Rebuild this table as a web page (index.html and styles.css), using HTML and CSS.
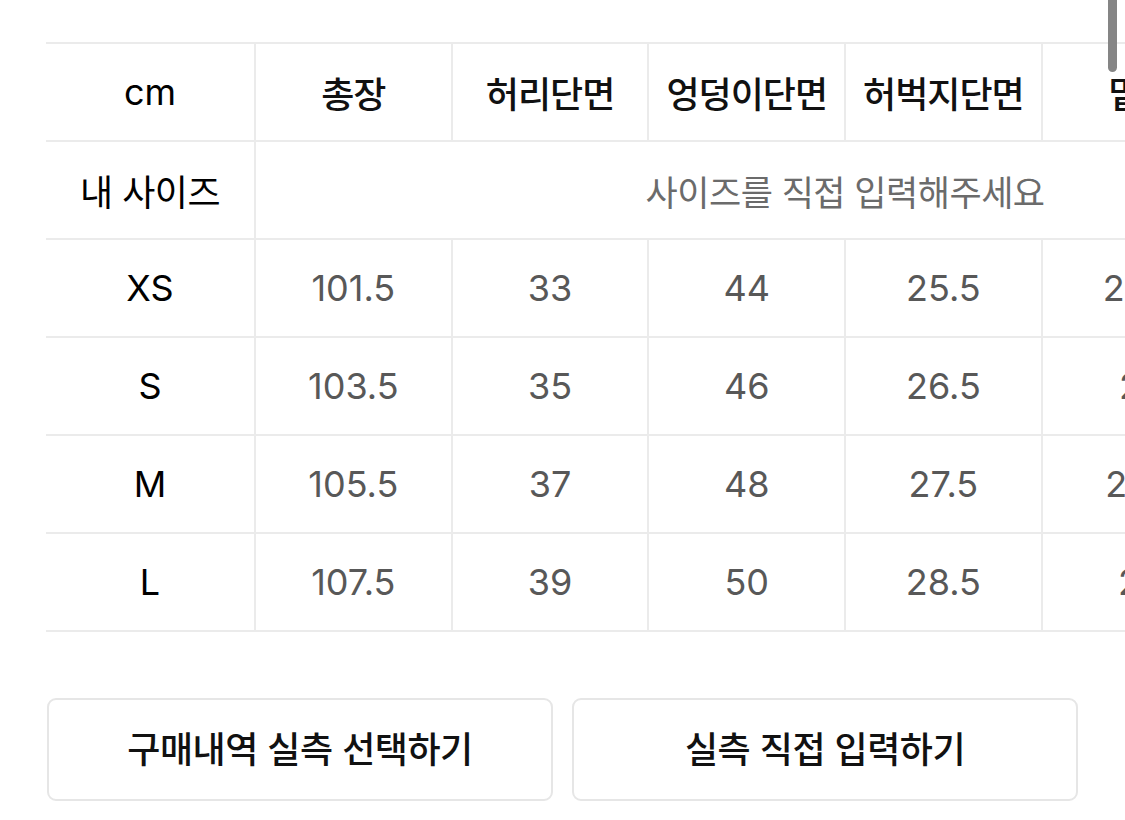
FILE: index.html
```html
<!DOCTYPE html>
<html lang="ko">
<head>
<meta charset="utf-8">
<link rel="stylesheet" href="styles.css">
</head>
<body>
<div class="page">
  <div class="table-wrap">
    <table class="size-table">
      <colgroup>
        <col class="col-label">
        <col class="col-data"><col class="col-data"><col class="col-data">
        <col class="col-data"><col class="col-data"><col class="col-data">
      </colgroup>
      <tr class="head">
        <th class="label latin">cm</th>
        <th>총장</th>
        <th>허리단면</th>
        <th>엉덩이단면</th>
        <th>허벅지단면</th>
        <th>밑위</th>
        <th>밑단단면</th>
      </tr>
      <tr>
        <th class="label mine">내 사이즈</th>
        <td class="hint" colspan="6">사이즈를 직접 입력해주세요</td>
      </tr>
      <tr>
        <th class="label latin">XS</th>
        <td>101.5</td><td>33</td><td>44</td><td>25.5</td><td>26.5</td><td>19</td>
      </tr>
      <tr>
        <th class="label latin">S</th>
        <td>103.5</td><td>35</td><td>46</td><td>26.5</td><td>27</td><td>20</td>
      </tr>
      <tr>
        <th class="label latin">M</th>
        <td>105.5</td><td>37</td><td>48</td><td>27.5</td><td>27.5</td><td>21</td>
      </tr>
      <tr>
        <th class="label latin">L</th>
        <td>107.5</td><td>39</td><td>50</td><td>28.5</td><td>28</td><td>22</td>
      </tr>
    </table>
  </div>
  <div class="actions">
    <button class="btn">구매내역 실측 선택하기</button>
    <button class="btn">실측 직접 입력하기</button>
  </div>
  <div class="scroll-thumb"></div>
</div>
</body>
</html>
```
FILE: styles.css
```css
html, body {
  margin: 0;
  padding: 0;
  background: #ffffff;
  overflow: hidden;
}
body {
  width: 1125px;
  height: 820px;
  font-family: Inter, "Noto Sans CJK KR", sans-serif;
  color: #111;
}
.page {
  position: relative;
  width: 1125px;
  height: 820px;
  overflow: hidden;
}
.table-wrap {
  padding: 42px 0 0 46px;
  width: 1079px;
  overflow: hidden;
}
.size-table {
  border-collapse: collapse;
  table-layout: fixed;
  width: 1389px;
}
.col-label { width: 209px; }
.col-data { width: 196.7px; }
.size-table th,
.size-table td {
  height: 96px;
  padding: 0;
  border: 2px solid #ebebeb;
  text-align: center;
  vertical-align: middle;
  white-space: nowrap;
}
.size-table tr > :first-child {
  border-left: none;
}
.size-table th {
  font-family: "Noto Sans CJK KR", sans-serif;
  font-size: 36px;
  font-weight: 500;
  letter-spacing: -1px;
  color: #111;
}
.size-table th.latin {
  font-family: Inter, "Noto Sans CJK KR", sans-serif;
  font-size: 36px;
  letter-spacing: 0;
  font-weight: 400;
  color: #000;
}
.size-table th.mine {
  font-size: 36px;
  letter-spacing: -0.5px;
  font-weight: 400;
  color: #000;
}
.size-table td {
  font-family: Inter, sans-serif;
  font-size: 36px;
  font-weight: 400;
  letter-spacing: 0;
  color: #585858;
}
.size-table td.hint {
  font-family: "Noto Sans CJK KR", sans-serif;
  font-size: 35px;
  letter-spacing: -0.5px;
  color: #6b6b6b;
}
.actions {
  display: flex;
  gap: 19px;
  padding: 66px 0 0 47px;
}
.btn {
  width: 506px;
  height: 103px;
  background: #fff;
  border: 2px solid #e6e6e6;
  border-radius: 9px;
  font-family: "Noto Sans CJK KR", sans-serif;
  font-size: 36px;
  font-weight: 500;
  letter-spacing: -0.5px;
  color: #111;
  padding: 0 0 6px;
}
.scroll-thumb {
  position: absolute;
  left: 1108px;
  top: -6px;
  width: 9px;
  height: 78px;
  border-radius: 5px;
  background: #858585;
}
```
